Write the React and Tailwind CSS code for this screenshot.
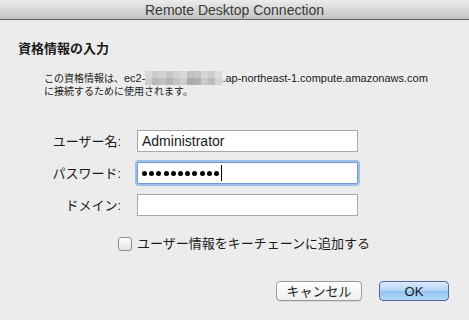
import React from "react";

const F = { fontFamily: '"Liberation Sans", "Noto Sans CJK JP", sans-serif' };

const blurCols = [
  ["#d9d9d9", "#cfcfcf"],
  ["#cbcbcb", "#b9b9bf"],
  ["#d3d3d3", "#c2c2c2"],
  ["#c6c6c6", "#b4b4b8"],
  ["#d2d2d2", "#c4c4c4"],
  ["#d8d8d8", "#cdcdcd"],
  ["#c1c1c1", "#a9a9ae"],
  ["#c6c6c6", "#b0b0b4"],
  ["#d6d6d6", "#c9c9c9"],
  ["#cdcdcd", "#bcbcbc"],
  ["#dcdcdc", "#d2d2d2"],
];

function Blur() {
  return (
    <span className="inline-flex align-middle -mt-[2px]">
      {blurCols.map((c, i) => (
        <span key={i} className="flex flex-col">
          <span className="block w-[7px] h-[7px]" style={{ background: c[0] }} />
          <span className="block w-[7px] h-[7px]" style={{ background: c[1] }} />
        </span>
      ))}
    </span>
  );
}

const dots = Array.from({ length: 11 });

export default function App() {
  return (
    <div className="w-[469px] h-[320px] bg-[#ececec] flex flex-col overflow-hidden text-[#1a1a1a]" style={F}>
      <div className="h-[20px] shrink-0 bg-gradient-to-b from-[#ececec] to-[#c4c4c4] border-b border-[#5e5e5e] flex items-center justify-center">
        <span className="text-[14px] leading-[18px] text-[#3a3a3a]">Remote Desktop Connection</span>
      </div>

      <div className="pl-[18px] pt-[21px] text-[13px] leading-[16px] font-bold">資格情報の入力</div>

      <div className="pl-[44px] mt-[15px] text-[10px] leading-[13px]">
        <div className="whitespace-nowrap">
          この資格情報は、<span className="text-[11px]">ec2-</span>
          <Blur />
          <span className="text-[11px]">.ap-northeast-1.compute.amazonaws.com</span>
        </div>
        <div>に接続するために使用されます。</div>
      </div>

      <div className="mt-[32px] flex flex-col gap-[10px]">
        <div className="flex items-center">
          <div className="w-[121px] text-right text-[13px]">ユーザー名:</div>
          <div className="ml-[16px] w-[221px] h-[22px] bg-white border border-[#a9a9a9] flex items-center pl-[4px] text-[14px]">
            Administrator
          </div>
        </div>
        <div className="flex items-center">
          <div className="w-[121px] text-right text-[13px]">パスワード:</div>
          <div className="ml-[16px] w-[221px] h-[22px] bg-white border border-[#6f9bd0] rounded-[2px] shadow-[0_0_0_2px_#9cc0e8] flex items-center pl-[4px]">
            {dots.map((_, i) => (
              <span key={i} className="w-[5px] h-[5px] rounded-full bg-black mr-[2.2px]" />
            ))}
            <span className="w-[1px] h-[16px] bg-black" />
          </div>
        </div>
        <div className="flex items-center">
          <div className="w-[121px] text-right text-[13px]">ドメイン:</div>
          <div className="ml-[16px] w-[221px] h-[22px] bg-white border border-[#a9a9a9]" />
        </div>
      </div>

      <div className="mt-[20px] pl-[118px] flex items-center">
        <span className="w-[14px] h-[14px] rounded-[3px] border border-[#8e8e8e] bg-gradient-to-b from-white to-[#e4e4e4]" />
        <span className="ml-[5px] text-[13px] leading-[16px]">ユーザー情報をキーチェーンに追加する</span>
      </div>

      <div className="mt-[29px] flex justify-end pr-[20px] gap-[17px]">
        <button className="w-[86px] h-[20px] rounded-[4px] border border-[#9a9a9a] bg-gradient-to-b from-white to-[#efefef] text-[13px] leading-none flex items-center justify-center shadow-[0_1px_0_rgba(0,0,0,0.08)]">
          キャンセル
        </button>
        <button className="w-[70px] h-[20px] rounded-[4px] border border-[#56689a] bg-[linear-gradient(to_bottom,#dcebfb_0%,#b3d5f7_48%,#94c4f3_52%,#b5d9f9_100%)] text-[13px] leading-none flex items-center justify-center">
          OK
        </button>
      </div>
    </div>
  );
}
